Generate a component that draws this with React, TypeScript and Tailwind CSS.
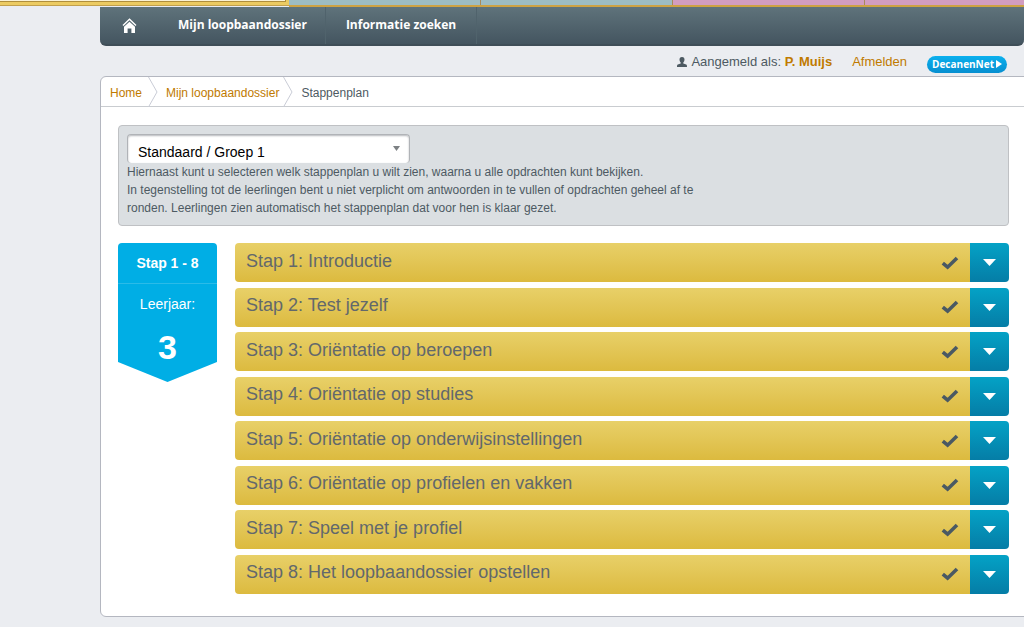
import { useState } from "react";
import clsx from "clsx";

const STEPS = [
  "Introductie",
  "Test jezelf",
  "Oriëntatie op beroepen",
  "Oriëntatie op studies",
  "Oriëntatie op onderwijsinstellingen",
  "Oriëntatie op profielen en vakken",
  "Speel met je profiel",
  "Het loopbaandossier opstellen",
];

const TABS = ["bg-[#9dbcc2]", "bg-[#9dbcc2]", "bg-[#d29dc0]", "bg-[#d29dc0]"];

function HomeIcon() {
  return (
    <svg viewBox="0 0 15 15" className="h-[15px] w-[15px]" aria-hidden>
      <path d="M1 7.5 7.5 1.2 14 7.5" fill="none" stroke="#fff" strokeWidth="1.4" />
      <path d="M2 8.8 7.5 3.8 13 8.8V15H9.4V10.5H5.6V15H2Z" fill="#fff" />
    </svg>
  );
}

function UserIcon() {
  return (
    <svg viewBox="0 0 10 10" className="h-2.5 w-2.5" aria-hidden>
      <path
        d="M5 0C6.8 0 7.6 1.2 7.5 2.8 7.4 4.2 6.8 5 6.3 5.5V6.4L9.2 7.6C9.8 8 10 8.6 10 10H0C0 8.6.2 8 .8 7.6L3.7 6.4V5.5C3.2 5 2.6 4.2 2.5 2.8 2.4 1.2 3.2 0 5 0Z"
        fill="#4d5a62"
      />
    </svg>
  );
}

function CheckIcon() {
  return (
    <svg viewBox="0 0 18 14" className="h-3.5 w-[18px]" aria-hidden>
      <path d="M1.8 7.2 6.6 11.2 16 2" fill="none" stroke="#4a5963" strokeWidth="3.6" />
    </svg>
  );
}

function Separator() {
  return (
    <svg viewBox="0 0 10 30" className="h-[30px] w-2.5" aria-hidden>
      <path d="M.5 0 9 15 .5 30" fill="none" stroke="#c9ccd6" />
    </svg>
  );
}

function TopTabs() {
  return (
    <div className="flex h-[7px]">
      <div className="h-1.5 w-[289px] shrink-0 border-b border-[#c2a04c] bg-[#eccb62]">
        <div className="mr-[3px] h-0.5 border-r border-b border-[#b08f3c] bg-[#fbf3d6]" />
      </div>
      <div className="flex min-w-0 flex-1 border-b-2 border-[#cda243]">
        {TABS.map((tab, i) => (
          <div key={i} className={clsx("w-48 shrink-0 border-r border-[#a88a5a]", tab)} />
        ))}
      </div>
    </div>
  );
}

function StepRow({ index, title }: { index: number; title: string }) {
  const [open, setOpen] = useState(false);

  return (
    <li className="flex h-[39px] overflow-hidden rounded-[4px]">
      <div className="flex flex-1 items-center justify-between bg-linear-to-b from-[#e8d068] to-[#dcba3e] px-[11px]">
        <h2 className="pb-1 text-lg leading-5 text-[#62686c]">
          Stap {index}: {title}
        </h2>
        <CheckIcon />
      </div>
      <button
        type="button"
        aria-label={`Stap ${index} openen`}
        aria-expanded={open}
        onClick={() => setOpen((v) => !v)}
        className="flex w-[39px] items-center justify-center bg-linear-to-b from-[#04a2c6] to-[#057da6]"
      >
        <svg viewBox="0 0 13 7" className="h-[7px] w-[13px]" aria-hidden>
          <path d="M0 0H13L6.5 7Z" fill="#fff" />
        </svg>
      </button>
    </li>
  );
}

export default function App() {
  return (
    <div className="min-h-screen overflow-hidden bg-[#ebedf1] font-['Liberation_Sans',Arial,sans-serif] text-[#4d5a62]">
      <TopTabs />
      <div className="ml-[100px]">
        <nav className="flex h-[39px] rounded-b-md border-b-2 border-[#3f4e58] bg-linear-to-b from-[#5f737b] to-[#445560] font-['Open_Sans',sans-serif] text-xs leading-9 font-bold text-white">
          <a href="#home" aria-label="Home" className="flex w-[58px] items-center justify-center">
            <HomeIcon />
          </a>
          <a href="#dossier" className="border-r border-[#50636c] pr-[18px] pl-5">
            Mijn loopbaandossier
          </a>
          <a href="#zoeken" className="border-r border-[#50636c] px-5">
            Informatie zoeken
          </a>
        </nav>

        <div className="flex h-[30px] items-center justify-end pt-0.5 pr-[17px] text-[13px] leading-4">
          <UserIcon />
          <span className="ml-1">
            Aangemeld als: <b className="text-[#c07a00]">P. Muijs</b>
          </span>
          <a href="#afmelden" className="ml-5 text-[#c07a00]">
            Afmelden
          </a>
          <a
            href="#decanennet"
            className="mt-1 ml-5 flex h-[17px] items-center gap-0.5 rounded-full bg-linear-to-b from-[#0bb0ee] to-[#078fd0] px-[5px] font-['Open_Sans',sans-serif] text-[10px] font-bold text-white"
          >
            DecanenNet
            <svg viewBox="0 0 6 8" className="h-2 w-1.5" aria-hidden>
              <path d="M0 0 6 4 0 8Z" fill="#fff" />
            </svg>
          </a>
        </div>

        <main className="-mr-2 rounded-md border border-[#b4b7c0] bg-white pr-2">
          <nav className="-mr-2 flex h-[30px] items-center border-b border-[#c9ccd0] pl-[9px] text-xs">
            <a href="#home" className="mr-1.5 pt-0.5 text-[#c07a00]">
              Home
            </a>
            <Separator />
            <a href="#dossier" className="mr-1 ml-2 pt-0.5 text-[#c07a00]">
              Mijn loopbaandossier
            </a>
            <Separator />
            <span className="ml-2 pt-0.5">Stappenplan</span>
          </nav>

          <div className="mt-[18px] mr-[14px] ml-[17px] rounded-[4px] border border-[#bfc1c4] bg-[#dbdfe2] p-2">
            <div className="relative w-[283px]">
              <select
                aria-label="Stappenplan"
                className="block h-[29px] w-full appearance-none rounded-[4px] border border-b-0 border-[#b0b3b7] bg-white pt-1.5 pl-2.5 text-sm text-black shadow-[inset_0_1px_2px_#b5b8bb]"
              >
                <option>Standaard / Groep 1</option>
              </select>
              <svg viewBox="0 0 7 5" className="pointer-events-none absolute top-3 right-2.5 h-[5px] w-[7px]" aria-hidden>
                <path d="M0 0H7L3.5 5Z" fill="#7d8184" />
              </svg>
            </div>
            <p className="max-w-[580px] text-xs leading-[18px]">
              Hiernaast kunt u selecteren welk stappenplan u wilt zien, waarna u alle opdrachten kunt bekijken.
              <br />
              In tegenstelling tot de leerlingen bent u niet verplicht om antwoorden in te vullen of opdrachten geheel af te
              ronden. Leerlingen zien automatisch het stappenplan dat voor hen is klaar gezet.
            </p>
          </div>

          <div className="mt-[17px] mr-[14px] mb-[22px] ml-[17px] flex items-start gap-[18px]">
            <aside className="w-[99px] shrink-0 text-center text-white">
              <div className="rounded-t-[4px] border-b border-[#2bbbe8] bg-[#00aee5] text-sm leading-10 font-bold">
                Stap 1 - 8
              </div>
              <div className="bg-[#00aee5] pt-2.5 text-sm leading-5">
                Leerjaar:
                <div className="pt-[18px] text-[34px] leading-[30px] font-bold">3</div>
              </div>
              <svg viewBox="0 0 98 20" preserveAspectRatio="none" className="block h-5 w-full" aria-hidden>
                <path d="M0 0H98L49 20Z" fill="#00aee5" />
              </svg>
            </aside>
            <ol className="flex min-h-[351px] flex-1 flex-col justify-between">
              {STEPS.map((title, i) => (
                <StepRow key={title} index={i + 1} title={title} />
              ))}
            </ol>
          </div>
        </main>
      </div>
    </div>
  );
}
